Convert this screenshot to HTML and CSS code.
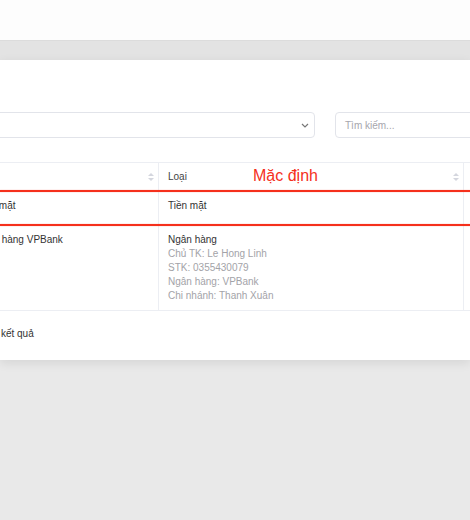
FILE: index.html
```html
<!DOCTYPE html>
<html lang="vi">
<head>
<meta charset="utf-8">
<title>Tài khoản</title>
<link rel="stylesheet" href="styles.css">
</head>
<body>
<div class="topbar"></div>
<div class="band"></div>
<section class="card">
  <div class="inner">
    <div class="filters">
      <div class="select">
        <span class="select-value"></span>
        <svg class="chev" width="8" height="5" viewBox="0 0 8 5"><path d="M1 1 L4 4 L7 1" fill="none" stroke="#777" stroke-width="1.2"/></svg>
      </div>
      <div class="search"><span class="ph">Tìm kiếm...</span></div>
    </div>
    <div class="table">
      <div class="row head">
        <div class="cell"><span class="sort"><i class="up"></i><i class="down"></i></span></div>
        <div class="cell">Loại<span class="sort"><i class="up"></i><i class="down"></i></span></div>
        <div class="cell"></div>
      </div>
      <div class="row r1">
        <div class="cell first">Tiền mặt</div>
        <div class="cell">Tiền mặt</div>
        <div class="cell"></div>
      </div>
      <div class="row r2">
        <div class="cell first">Ngân hàng VPBank</div>
        <div class="cell">
          <div>Ngân hàng</div>
          <div class="sub">Chủ TK: Le Hong Linh</div>
          <div class="sub">STK: 0355430079</div>
          <div class="sub">Ngân hàng: VPBank</div>
          <div class="sub">Chi nhánh: Thanh Xuân</div>
        </div>
        <div class="cell"></div>
      </div>
    </div>
    <div class="footer">Tổng 2 kết quả</div>
  </div>
  <div class="mark line1"></div>
  <div class="mark line2"></div>
  <div class="mark-label">Mặc định</div>
</section>
</body>
</html>
```
FILE: styles.css
```css
html, body {
  margin: 0;
  padding: 0;
  overflow: hidden;
}
body {
  background: #e9e9e9;
  font-family: "Liberation Sans", Arial, sans-serif;
  font-size: 10px;
  color: #333;
  width: 470px;
  height: 520px;
}
.topbar {
  height: 40px;
  background: #fdfdfd;
}
.band {
  height: 20px;
  background: #e3e3e3;
  border-top: 1px solid #dcdcdc;
  box-sizing: border-box;
}
.card {
  position: relative;
  height: 300px;
  background: #fff;
  box-sizing: border-box;
  padding-top: 52px;
  box-shadow: 0 3px 10px rgba(0, 0, 0, 0.09);
}
.inner {
  margin-left: -34px;
  width: 600px;
}
.filters {
  display: flex;
  gap: 20px;
  height: 26px;
}
.select {
  width: 349px;
  box-sizing: border-box;
  border: 1px solid #e2e4ea;
  border-radius: 4px;
  display: flex;
  align-items: center;
  justify-content: flex-end;
  padding-right: 5px;
}
.chev {
  display: block;
}
.search {
  width: 170px;
  box-sizing: border-box;
  border: 1px solid #e2e4ea;
  border-radius: 4px;
  display: flex;
  align-items: center;
  padding-left: 9px;
}
.ph {
  color: #a6a6ad;
  font-size: 10px;
}
.table {
  margin-top: 24px;
  border-top: 1px solid #eceef3;
}
.row {
  display: grid;
  grid-template-columns: 193px 305px 102px;
  border-bottom: 1px solid #eceef3;
}
.cell {
  position: relative;
  padding: 0 9px;
  border-right: 1px solid #eceef3;
  line-height: 14px;
}
.r1 .first {
  padding-left: 11px;
}
.head .cell {
  height: 28px;
  display: flex;
  align-items: center;
  color: #444;
}
.r1 .cell {
  padding-top: 7px;
  padding-bottom: 12px;
}
.r2 .cell {
  padding-top: 7px;
  padding-bottom: 7px;
}
.sub {
  color: #a3a3a8;
}
.sort {
  position: absolute;
  right: 4px;
  top: 10px;
  width: 6px;
  height: 8px;
}
.sort i {
  position: absolute;
  left: 0;
  width: 0;
  height: 0;
  border-left: 3px solid transparent;
  border-right: 3px solid transparent;
}
.sort .up {
  top: 0;
  border-bottom: 3px solid #d4d6de;
}
.sort .down {
  bottom: 0;
  border-top: 3px solid #d4d6de;
}
.footer {
  padding-top: 16px;
  line-height: 14px;
  color: #333;
  margin-left: 1px;
}
.mark {
  position: absolute;
  left: 0;
  right: 0;
  height: 2px;
  background: #f5301c;
  box-shadow: 0 0 1px rgba(245, 48, 28, 0.7);
}
.line1 {
  top: 130px;
}
.line2 {
  top: 164px;
}
.mark-label {
  position: absolute;
  left: 253px;
  top: 106px;
  font-size: 16px;
  line-height: 20px;
  color: #f5301c;
}
```
